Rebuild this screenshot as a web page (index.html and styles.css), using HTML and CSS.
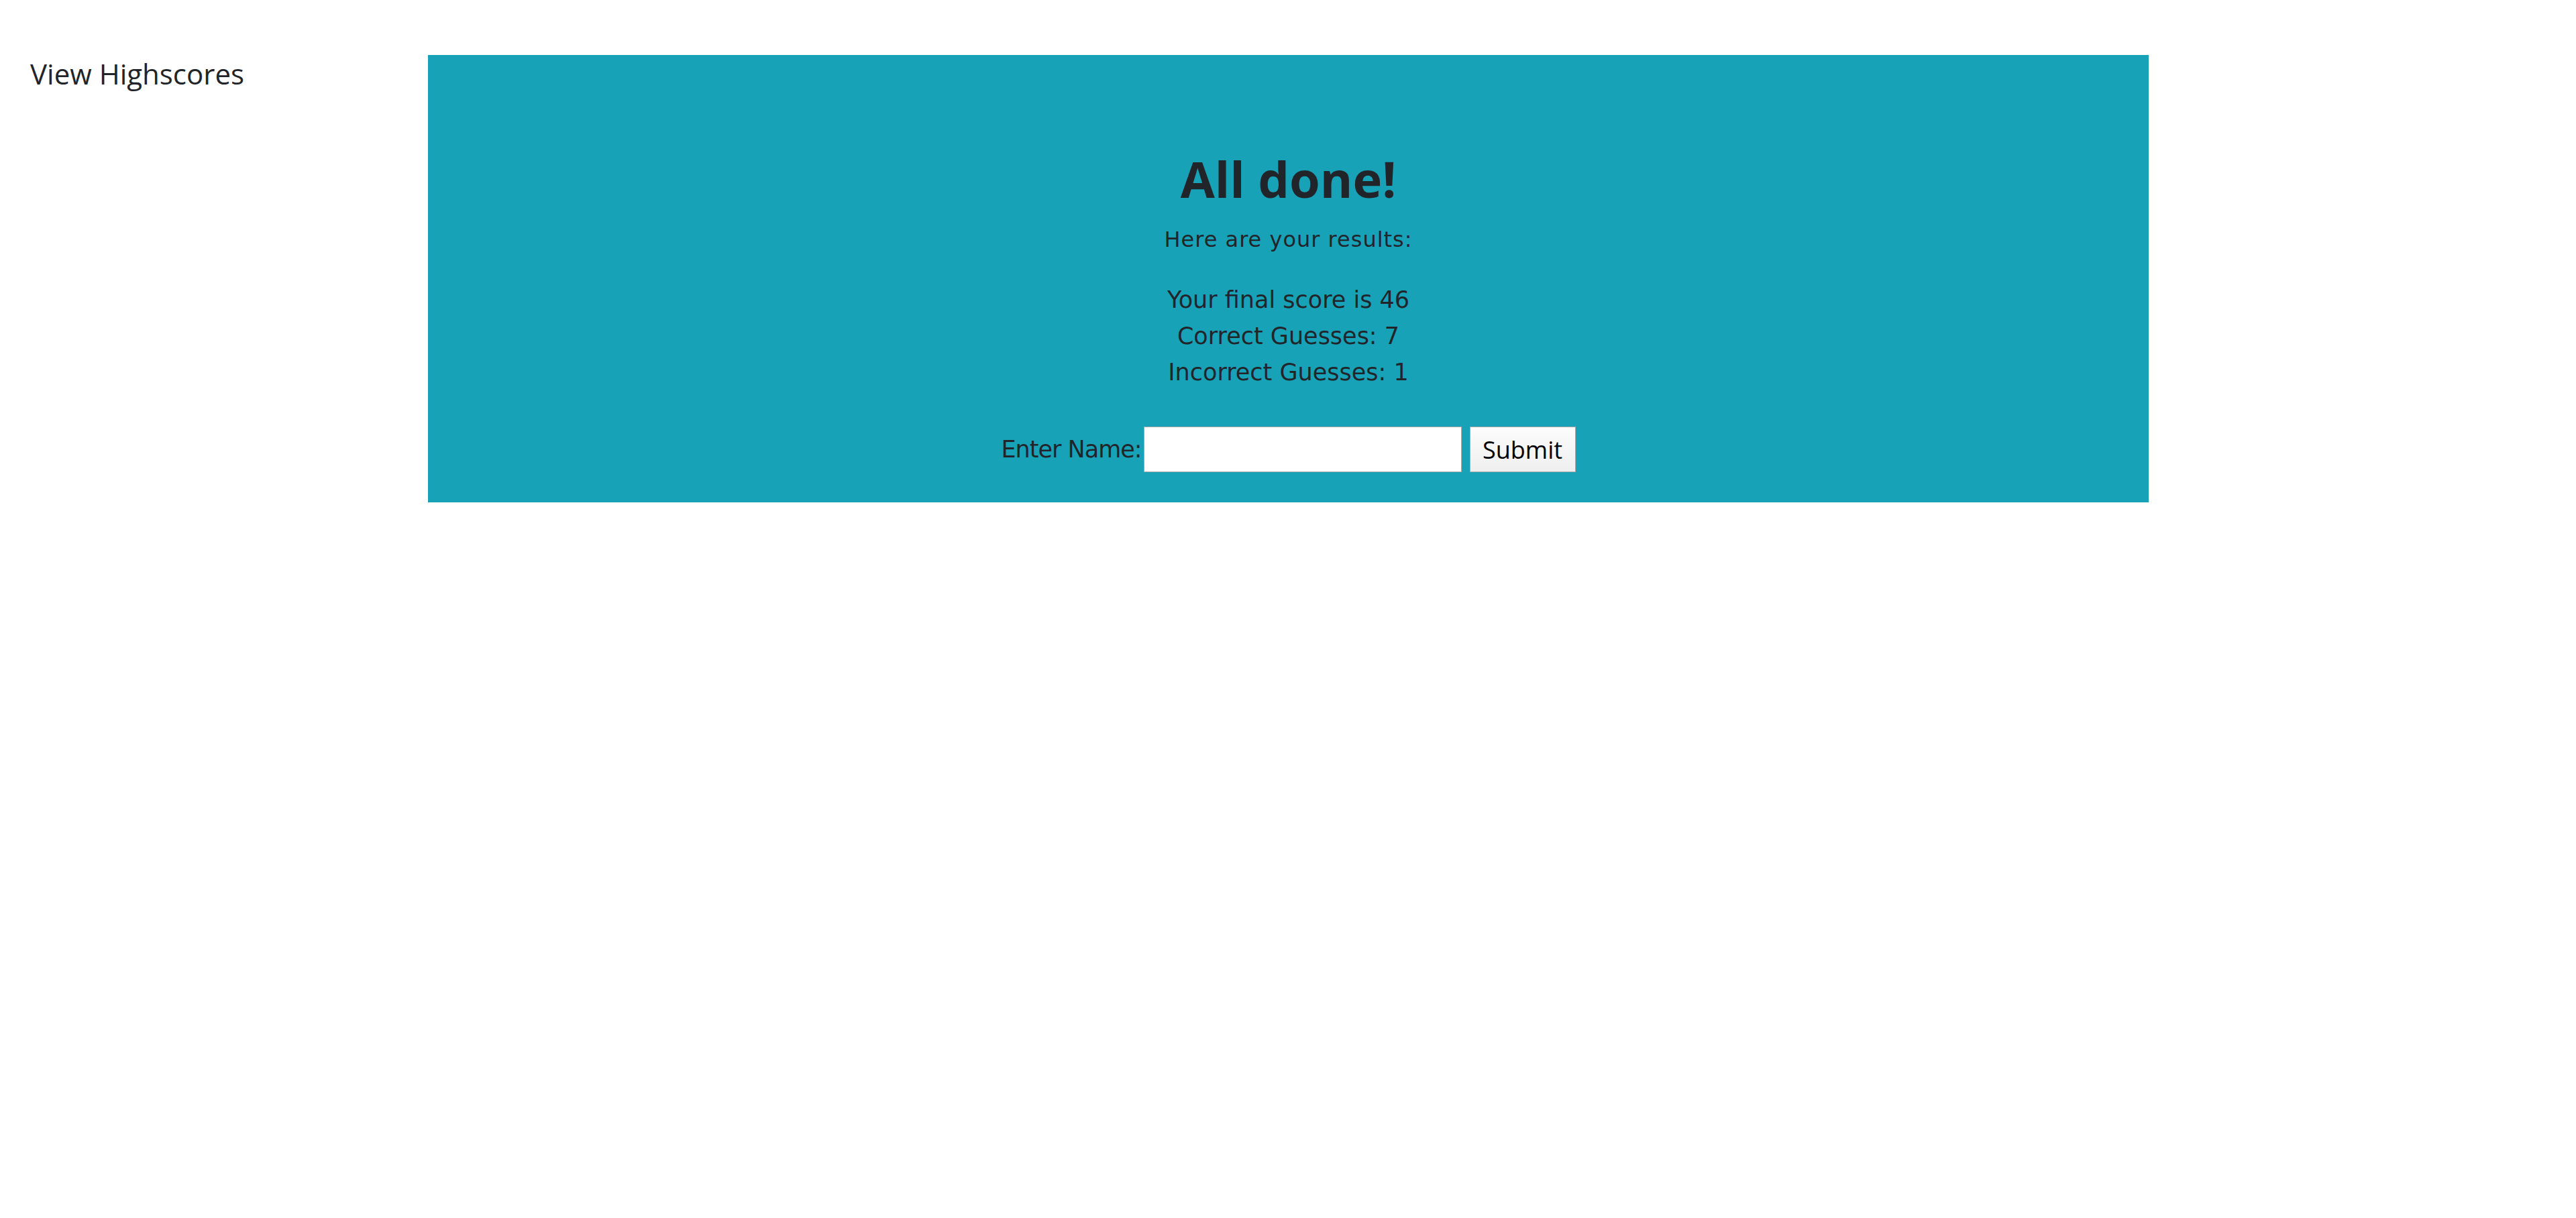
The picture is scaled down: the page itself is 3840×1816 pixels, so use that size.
FILE: index.html
```html
<!DOCTYPE html>
<html lang="en">
<head>
<meta charset="utf-8">
<title>Quiz - All done</title>
<link rel="stylesheet" href="styles.css">
</head>
<body>
<div class="page">
  <div class="side">
    <a class="highscores" href="#">View Highscores</a>
  </div>
  <main class="card">
    <h1 class="title">All done!</h1>
    <p class="subtitle">Here are your results:</p>
    <div class="scores">
      <div>Your final score is 46</div>
      <div>Correct Guesses: 7</div>
      <div>Incorrect Guesses: 1</div>
    </div>
    <form class="name-form">
      <label class="name-label" for="name">Enter Name:</label>
      <input class="name-input" id="name" type="text">
      <button class="submit" type="button">Submit</button>
    </form>
  </main>
</div>
</body>
</html>
```
FILE: styles.css
```css
html, body {
  margin: 0;
  padding: 0;
  background: #ffffff;
}

body {
  color: #212529;
  font-family: "DejaVu Sans", "Open Sans", sans-serif;
}

.page {
  display: grid;
  grid-template-columns: 638px 2565px 1fr;
  align-items: start;
}

.side {
  padding-left: 45px;
  margin-top: 78px;
}

.highscores {
  font-family: "Open Sans", "Noto Sans", sans-serif;
  font-size: 42px;
  line-height: 63px;
  color: #212529;
  text-decoration: none;
}

.card {
  margin-top: 82px;
  background: #17a2b8;
  padding: 140px 0 45px;
  display: flex;
  flex-direction: column;
  align-items: center;
  text-align: center;
}

.title {
  margin: 0;
  font-family: "Open Sans", "Noto Sans", sans-serif;
  font-weight: 700;
  font-size: 74px;
  line-height: 90px;
  color: #212529;
}

.subtitle {
  margin: 23px 0 0;
  font-size: 32px;
  line-height: 45px;
  letter-spacing: 1px;
}

.scores {
  margin-top: 40px;
  font-size: 35px;
  line-height: 54px;
}

.name-form {
  margin-top: 54px;
  display: flex;
  align-items: center;
  height: 68px;
}

.name-label {
  font-size: 35px;
  line-height: 68px;
  letter-spacing: -1px;
  margin-right: 3px;
}

.name-input {
  box-sizing: border-box;
  width: 474px;
  height: 68px;
  margin: 0;
  border: 1px solid #a9a9a9;
  background: #ffffff;
  padding: 0 6px;
}

.submit {
  box-sizing: border-box;
  margin: 0 0 0 12px;
  width: 158px;
  height: 68px;
  padding: 0;
  border: 1px solid #a9a9a9;
  background: linear-gradient(#fcfcfc, #efefef);
  color: #000000;
  font-family: "Open Sans", "Noto Sans", sans-serif;
  font-size: 36px;
}
```
